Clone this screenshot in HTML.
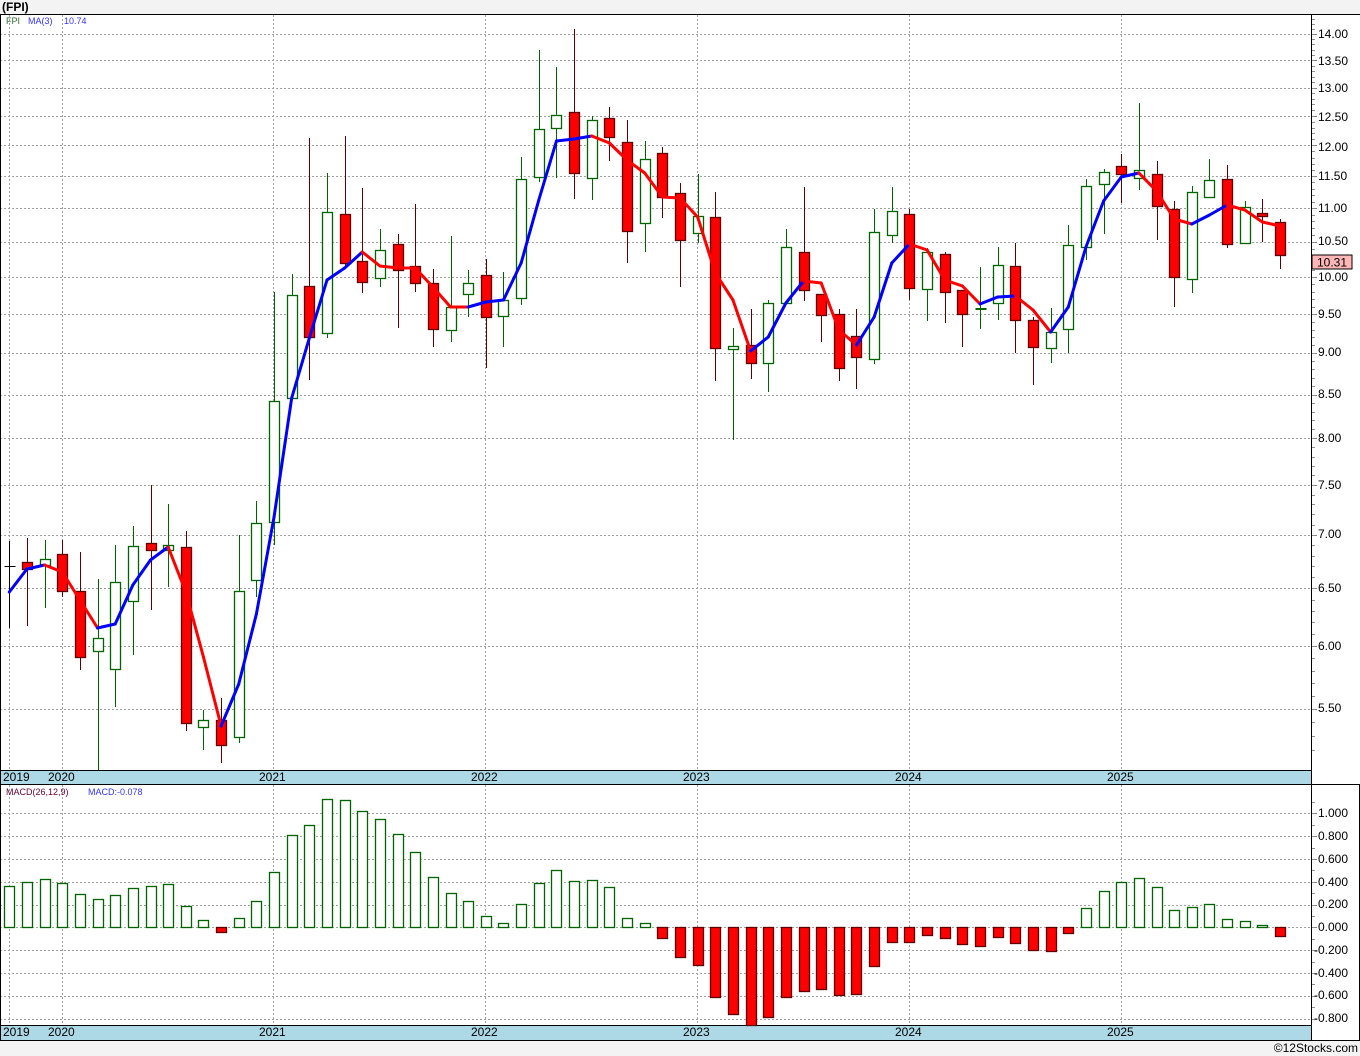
<!DOCTYPE html>
<html><head><meta charset="utf-8">
<style>
html,body{margin:0;padding:0;background:#f3f3f3;}
svg{display:block;}
text{font-family:"Liberation Sans",Verdana,sans-serif;}
</style></head>
<body>
<svg id="s" width="1360" height="1056" viewBox="0 0 1360 1056" xmlns="http://www.w3.org/2000/svg">
<rect x="0" y="0" width="1360" height="1056" fill="#f3f3f3"/>
<rect x="0" y="14" width="1360" height="1026" fill="#ffffff"/>
<text x="2" y="11" font-size="12" font-weight="bold" fill="#000">(FPI)</text>
<g id="grid"></g>
<g id="ticks"></g>
<!-- date bars -->
<rect x="0" y="770" width="1311" height="14" fill="#add8e6"/>
<rect x="0" y="1025" width="1311" height="15" fill="#add8e6"/>
<line x1="0" y1="770.5" x2="1311" y2="770.5" stroke="#000"/>
<line x1="0" y1="1025.5" x2="1311" y2="1025.5" stroke="#000"/>
<line x1="0" y1="14.5" x2="1360" y2="14.5" stroke="#000"/>
<line x1="0" y1="784.5" x2="1360" y2="784.5" stroke="#000"/>
<line x1="0" y1="1040.5" x2="1360" y2="1040.5" stroke="#000"/>
<line x1="0.5" y1="14" x2="0.5" y2="1040" stroke="#000"/>
<line x1="1311.5" y1="14" x2="1311.5" y2="1040" stroke="#000"/>
<line x1="1359.5" y1="784" x2="1359.5" y2="1040" stroke="#000"/>
<g font-size="12" fill="#000">
<text x="3" y="781">2019</text><text x="48" y="781">2020</text><text x="259" y="781">2021</text><text x="471" y="781">2022</text><text x="683" y="781">2023</text><text x="895" y="781">2024</text><text x="1107" y="781">2025</text>
<text x="3" y="1036">2019</text><text x="48" y="1036">2020</text><text x="259" y="1036">2021</text><text x="471" y="1036">2022</text><text x="683" y="1036">2023</text><text x="895" y="1036">2024</text><text x="1107" y="1036">2025</text>
</g>
<g font-size="12" fill="#000">
<text x="1318" y="38">14.00</text><text x="1318" y="65">13.50</text><text x="1318" y="92">13.00</text><text x="1318" y="121">12.50</text><text x="1318" y="151">12.00</text><text x="1318" y="180">11.50</text><text x="1318" y="212">11.00</text><text x="1318" y="245">10.50</text><text x="1318" y="281">10.00</text><text x="1318" y="318">9.50</text><text x="1318" y="356">9.00</text><text x="1318" y="398">8.50</text><text x="1318" y="442">8.00</text><text x="1318" y="489">7.50</text><text x="1318" y="538">7.00</text><text x="1318" y="592">6.50</text><text x="1318" y="650">6.00</text><text x="1318" y="712">5.50</text>
<text x="1318" y="817">1.000</text><text x="1318" y="840">0.800</text><text x="1318" y="863">0.600</text><text x="1318" y="886">0.400</text><text x="1318" y="908">0.200</text><text x="1318" y="931">0.000</text><text x="1314" y="954">-0.200</text><text x="1314" y="977">-0.400</text><text x="1314" y="999">-0.600</text><text x="1314" y="1022">-0.800</text>
</g>
<rect x="1312" y="255" width="40" height="14" fill="#ffb6b6" stroke="#000"/>
<text x="1317" y="266.5" font-size="12" fill="#000">10.31</text>
<g id="candles"></g>
<g id="ma"></g>
<g id="macd"></g>
<text x="6" y="24" font-size="9" fill="#2e6b2e">FPI</text>
<text x="28" y="24" font-size="9" fill="#3333ff">MA(3)</text>
<text x="64" y="24" font-size="9" fill="#3333ff">10.74</text>
<text x="6" y="795" font-size="9" fill="#660033">MACD(26,12,9)</text>
<text x="88" y="795" font-size="9" fill="#3333ff">MACD:-0.078</text>
<text x="1358" y="1052" font-size="12" fill="#000" text-anchor="end">©12Stocks.com</text>
</svg>
<script>
var NS="http://www.w3.org/2000/svg";
function el(p,t,a){var e=document.createElementNS(NS,t);for(var k in a)e.setAttribute(k,a[k]);p.appendChild(e);return e;}
var grid=document.getElementById('grid'),ticks=document.getElementById('ticks');
function py(p){return 34+(Math.log(14)-Math.log(p))*722.5;}
for(var p=5.5;p<=14.001;p+=0.5){var y=Math.round(py(p))+0.5;el(grid,'line',{x1:0,y1:y,x2:1311,y2:y,stroke:'#a0a0a0','stroke-dasharray':'2,2'});el(ticks,'line',{x1:1311,y1:y,x2:1317,y2:y,stroke:'#808080'});}
for(var p=5.2;p<=14.3;p+=0.1){var y=Math.round(py(p))+0.5;if(y>770||y<15)continue;el(ticks,'line',{x1:1311,y1:y,x2:1315,y2:y,stroke:'#909090'});}
function my(v){return 927.3-v*114;}
for(var v=-0.8;v<=1.001;v+=0.2){var y=Math.round(my(v))+0.5;el(grid,'line',{x1:0,y1:y,x2:1311,y2:y,stroke:'#a0a0a0','stroke-dasharray':'2,2'});el(ticks,'line',{x1:1311,y1:y,x2:1317,y2:y,stroke:'#808080'});}
for(var v=-0.9;v<=1.15;v+=0.1){var y=Math.round(my(v))+0.5;if(y<786||y>1024)continue;el(ticks,'line',{x1:1311,y1:y,x2:1315,y2:y,stroke:'#909090'});}
[9.5,62.5,273.5,485.5,697.5,909.5,1121.5].forEach(function(x){el(grid,'line',{x1:x,y1:15,x2:x,y2:770,stroke:'#a0a0a0','stroke-dasharray':'2,2'});el(grid,'line',{x1:x,y1:785,x2:x,y2:1025,stroke:'#a0a0a0','stroke-dasharray':'2,2'});});
function cx(i){return 9.3+17.65*i;}
var C=[
['k',541,566,566,628],['r',538,562,569,626],['g',540,559,565,608],['r',540,554,591,597],['r',552,591,657,670],
['g',579,638,651,770],['g',545,582,669,707],['g',526,546,601,655],['r',485,543,550,610],['g',504,545,550,587],
['r',531,547,723,731],['g',710,720,727,750],['r',698,720,745,763],['g',535,591,737,743],['g',501,523,580,597],
['g',292,401,522,545],['g',274,295,398,398],['r',138,286,337,380],['g',173,212,333,338],['r',136,214,263,267],
['r',188,261,282,293],['g',229,250,278,287],['r',234,244,270,328],['r',204,266,283,292],['r',269,283,329,347],
['g',236,307,330,342],['g',270,283,294,317],['r',259,275,317,368],['g',272,300,316,347],['g',157,179,298,305],
['g',50,129,177,182],['g',67,115,128,178],['r',29,112,173,199],['g',116,120,178,200],['r',107,118,137,161],
['r',120,142,231,263],['g',141,159,223,252],['r',147,153,197,218],['r',183,193,240,287],['g',174,216,233,243],
['r',192,217,348,381],['g',328,346,349,440],['r',309,345,363,379],['g',300,303,363,392],['g',229,247,303,303],
['r',187,252,290,301],['r',294,294,315,342],['r',309,314,368,381],['r',309,336,357,389],['g',209,232,359,364],
['g',187,211,235,243],['r',209,214,288,300],['g',248,252,289,321],['r',252,254,292,323],['r',290,290,314,347],
['d',267,308,310,329],['g',247,265,303,320],['r',243,266,320,353],['r',317,320,347,385],['g',308,332,348,363],
['g',225,245,329,353],['g',179,186,247,260],['g',169,172,184,234],['r',154,166,174,203],['g',103,170,178,190],
['r',161,174,206,240],['r',201,209,277,307],['g',186,192,279,293],['g',159,180,197,197],['r',165,179,244,248],
['g',201,207,243,243],['r',199,213,216,242],['r',219,222,255,269]];
var cg=document.getElementById('candles');
C.forEach(function(c,i){var x=Math.round(cx(i))+0.5;var t=c[0];
 var col=t=='r'?'#600000':(t=='k'?'#000':'#006400');
 el(cg,'line',{x1:x,y1:c[1],x2:x,y2:c[4],stroke:col});
 if(t=='k'){el(cg,'line',{x1:x-5,y1:c[2]+0.5,x2:x+6,y2:c[2]+0.5,stroke:'#000'});return;}
 if(t=='d'){el(cg,'rect',{x:x-5,y:c[2],width:11,height:2,fill:'#006400'});return;}
 el(cg,'rect',{x:x-5,y:c[2]+0.5,width:10,height:Math.max(c[3]-c[2],2),fill:t=='r'?'#ff0000':'#fff',stroke:col,'stroke-width':1.3});
});
var M=[592,569,565,572,600,628,624,585,560,547,592,657,726,684,614,517,398,338,280,268,252,266,268,268,287,307,307,302,300,263,200,141,139,136,143,160,173,197,198,217,273,300,351,337,303,281,283,330,345,317,263,244,250,280,286,304,297,296,310,332,307,247,201,177,173,191,219,224,215,205,210,222,226];
var mg=document.getElementById('ma');
for(var i=0;i<M.length-1;i++){el(mg,'line',{x1:cx(i),y1:M[i],x2:cx(i+1),y2:M[i+1],stroke:M[i+1]<M[i]?'#0000ff':'#ff0000','stroke-width':3,'stroke-linecap':'round'});}
var D=[886,882,879,883,894,899,895,888,886,884,906,920,932,918,901,872,835,825,799,800,811,819,834,852,877,893,901,916,923,904,883,870,881,880,887,918,923,938,957,965,997,1014,1025,1017,997,991,989,995,994,966,942,942,935,938,944,946,937,943,950,951,933,908,891,882,878,887,910,907,904,919,921,925,936];
var dg=document.getElementById('macd');
D.forEach(function(v,i){var x=Math.round(cx(i))-4.5;
 if(v<927){el(dg,'rect',{x:x,y:v+0.5,width:10,height:927-v,fill:'#fff',stroke:'#006400','stroke-width':1.3});}
 else{el(dg,'rect',{x:x,y:927.5,width:10,height:v-927,fill:'#ff0000',stroke:'#600000','stroke-width':1.3});}
});
</script>
</body></html>
